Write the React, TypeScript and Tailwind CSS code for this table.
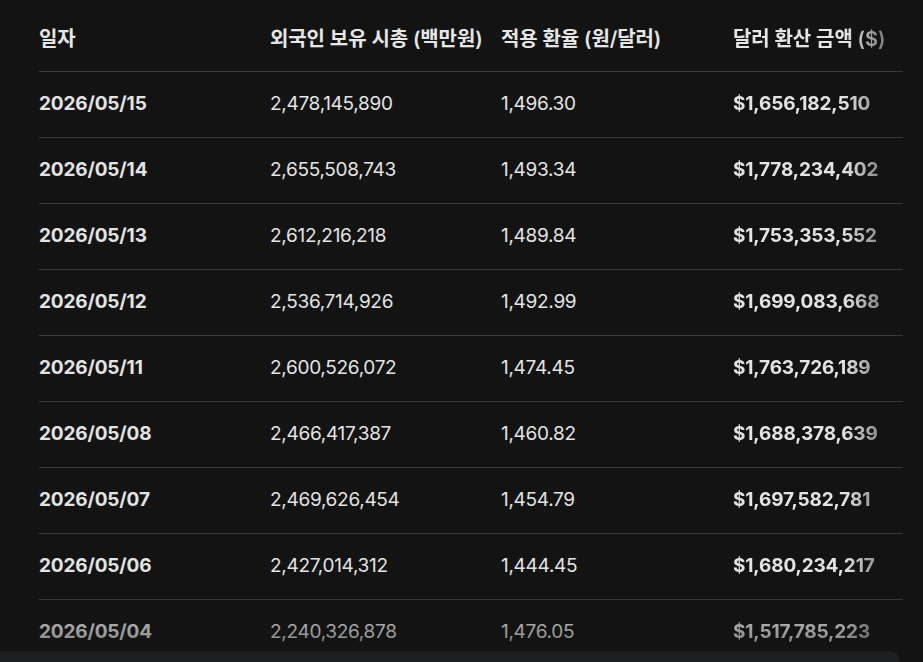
import React from "react";

const ROWS: [string, string, string, string][] = [
  ["2026/05/15", "2,478,145,890", "1,496.30", "$1,656,182,510"],
  ["2026/05/14", "2,655,508,743", "1,493.34", "$1,778,234,402"],
  ["2026/05/13", "2,612,216,218", "1,489.84", "$1,753,353,552"],
  ["2026/05/12", "2,536,714,926", "1,492.99", "$1,699,083,668"],
  ["2026/05/11", "2,600,526,072", "1,474.45", "$1,763,726,189"],
  ["2026/05/08", "2,466,417,387", "1,460.82", "$1,688,378,639"],
  ["2026/05/07", "2,469,626,454", "1,454.79", "$1,697,582,781"],
  ["2026/05/06", "2,427,014,312", "1,444.45", "$1,680,234,217"],
  ["2026/05/04", "2,240,326,878", "1,476.05", "$1,517,785,223"],
];

const COLS = "grid grid-cols-[231px_231px_232px_1fr]";
// last column text fades out toward the right edge
const FADE = "[mask-image:linear-gradient(to_right,black_112px,rgba(0,0,0,0.4)_160px)]";

export default function App() {
  return (
    <div
      className="relative w-[923px] h-[662px] overflow-hidden bg-[#131313] text-[#e3e3e3]"
      style={{ fontFamily: "Inter, 'Noto Sans CJK KR', sans-serif" }}
    >
      <div className="pl-[39px] pr-[20px]">
        {/* header */}
        <div className={`${COLS} h-[72px] items-center pt-[6px] border-b border-[#3a3a3a] text-[20px] font-semibold text-[#e6e6e6] tracking-[-0.1px]`}>
          <div>일자</div>
          <div>외국인 보유 시총 (백만원)</div>
          <div>적용 환율 (원/달러)</div>
          <div className={FADE}>달러 환산 금액 ($)</div>
        </div>

        {ROWS.map((r) => (
          <div key={r[0]} className={`${COLS} h-[66px] items-center border-b border-[#3a3a3a] text-[19px]`}>
            <div className="font-bold tracking-[-0.15px]">{r[0]}</div>
            <div className="tracking-[-0.3px]">{r[1]}</div>
            <div className="tracking-[-0.3px]">{r[2]}</div>
            <div className={`font-bold tracking-[-0.15px] ${FADE}`}>{r[3]}</div>
          </div>
        ))}
      </div>

      {/* bottom fade */}
      <div className="pointer-events-none absolute left-0 bottom-0 w-full h-[70px] bg-gradient-to-b from-[#131313]/0 to-[#131313]/60" />

      {/* bottom bar */}
      <div className="absolute left-0 bottom-0 h-[11px] w-[900px] rounded-tr-[22px] bg-[#1e1f20]" />
    </div>
  );
}
